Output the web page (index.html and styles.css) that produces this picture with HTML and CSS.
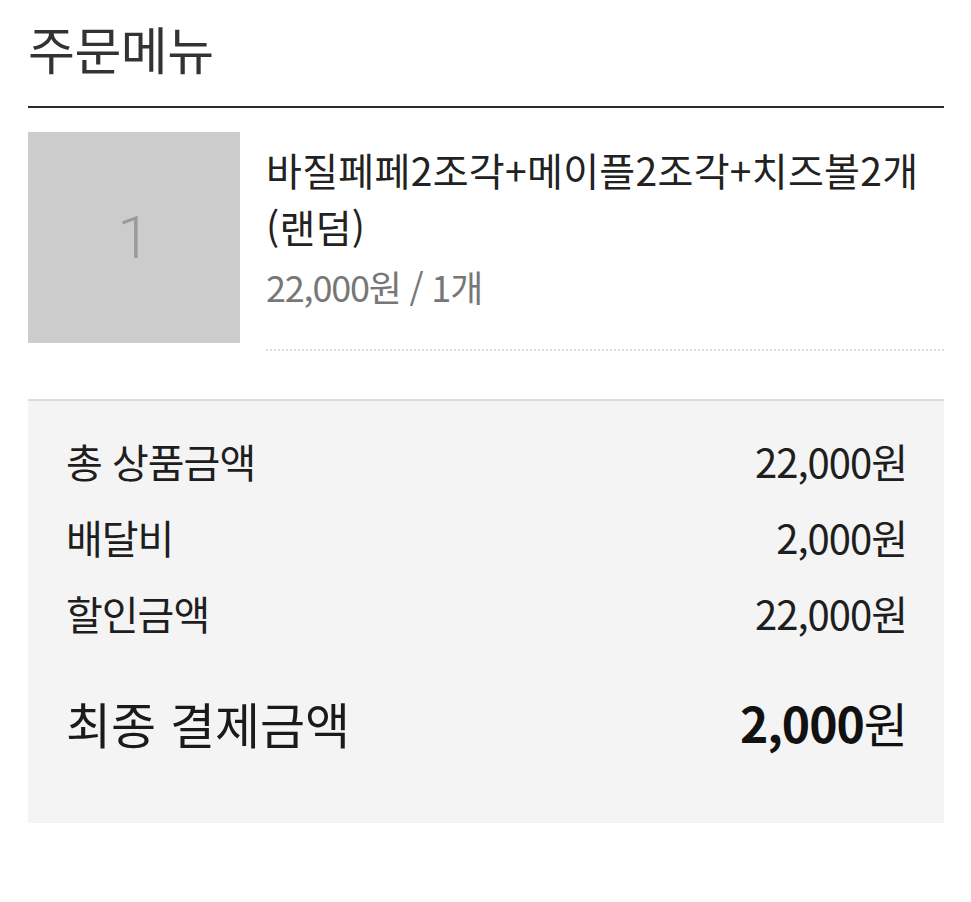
FILE: index.html
```html
<!DOCTYPE html>
<html lang="ko">
<head>
<meta charset="utf-8">
<title>주문메뉴</title>
<link rel="stylesheet" href="styles.css">
</head>
<body>
<main class="page">
  <header class="section-head">
    <h1 class="section-title">주문메뉴</h1>
  </header>

  <div class="item">
    <div class="thumb"><span class="thumb-num">1</span></div>
    <div class="item-info">
      <p class="item-name">바질페페2조각+메이플2조각+치즈볼2개 <span class="nowrap">(랜덤)</span></p>
      <p class="item-price">22,000원 / 1개</p>
    </div>
  </div>

  <section class="summary">
    <div class="summary-row">
      <span class="label">총 상품금액</span>
      <span class="value">22,000원</span>
    </div>
    <div class="summary-row">
      <span class="label">배달비</span>
      <span class="value">2,000원</span>
    </div>
    <div class="summary-row">
      <span class="label">할인금액</span>
      <span class="value">22,000원</span>
    </div>
    <div class="summary-total">
      <span class="total-label">최종 결제금액</span>
      <span class="total-value">2,000<span class="won">원</span></span>
    </div>
  </section>
</main>
</body>
</html>
```

FILE: styles.css
```css
* { box-sizing: border-box; }

html, body {
  margin: 0;
  padding: 0;
  background: #ffffff;
}

body {
  font-family: "Noto Sans CJK KR", "Noto Sans", sans-serif;
  color: #222222;
}

.page {
  padding: 0 27px 0 28px;
}

.section-head {
  padding-top: 18px;
  padding-bottom: 28px;
  border-bottom: 2px solid #2b2b2b;
}

.section-title {
  margin: 0;
  font-size: 51px;
  line-height: 60px;
  font-weight: 400;
  color: #333333;
  letter-spacing: -0.5px;
}

.item {
  display: flex;
  gap: 26px;
  margin-top: 24px;
}

.thumb {
  flex: 0 0 212px;
  height: 211px;
  background: #cccccc;
  display: flex;
  align-items: center;
  justify-content: center;
}

.thumb-num {
  font-family: Roboto, "Noto Sans", sans-serif;
  font-weight: 300;
  font-size: 60px;
  color: #9a9a9a;
  line-height: 1;
}

.item-info {
  flex: 1;
  padding-top: 9px;
  border-bottom: 2px dotted #dcdcdc;
  height: 219px;
}

.item-name {
  margin: 0;
  font-size: 39px;
  line-height: 57px;
  color: #222222;
  letter-spacing: 0.3px;
}

.nowrap {
  white-space: nowrap;
}

.item-price {
  margin: 5px 0 0;
  font-size: 36px;
  line-height: 52px;
  color: #777777;
  letter-spacing: -1.2px;
}

.summary {
  margin-top: 48px;
  background: #f4f4f4;
  border-top: 2px solid #dddddd;
  padding: 22px 37px 71px 38px;
}

.summary-row {
  display: flex;
  justify-content: space-between;
  align-items: center;
  height: 76px;
  font-size: 40px;
  color: #1e1e1e;
  letter-spacing: -1px;
}

.summary-row:last-of-type {
  border-bottom: 2px dashed #dcdcdc;
  height: 94px;
  padding-bottom: 18px;
}

.summary-total {
  display: flex;
  justify-content: space-between;
  align-items: center;
  margin-top: 41px;
  height: 60px;
  color: #1a1a1a;
}

.total-label {
  font-size: 49px;
  font-weight: 400;
}

.total-value {
  font-size: 48px;
  font-weight: 700;
  color: #111111;
  letter-spacing: -1px;
}

.total-value .won {
  font-weight: 400;
}
```
